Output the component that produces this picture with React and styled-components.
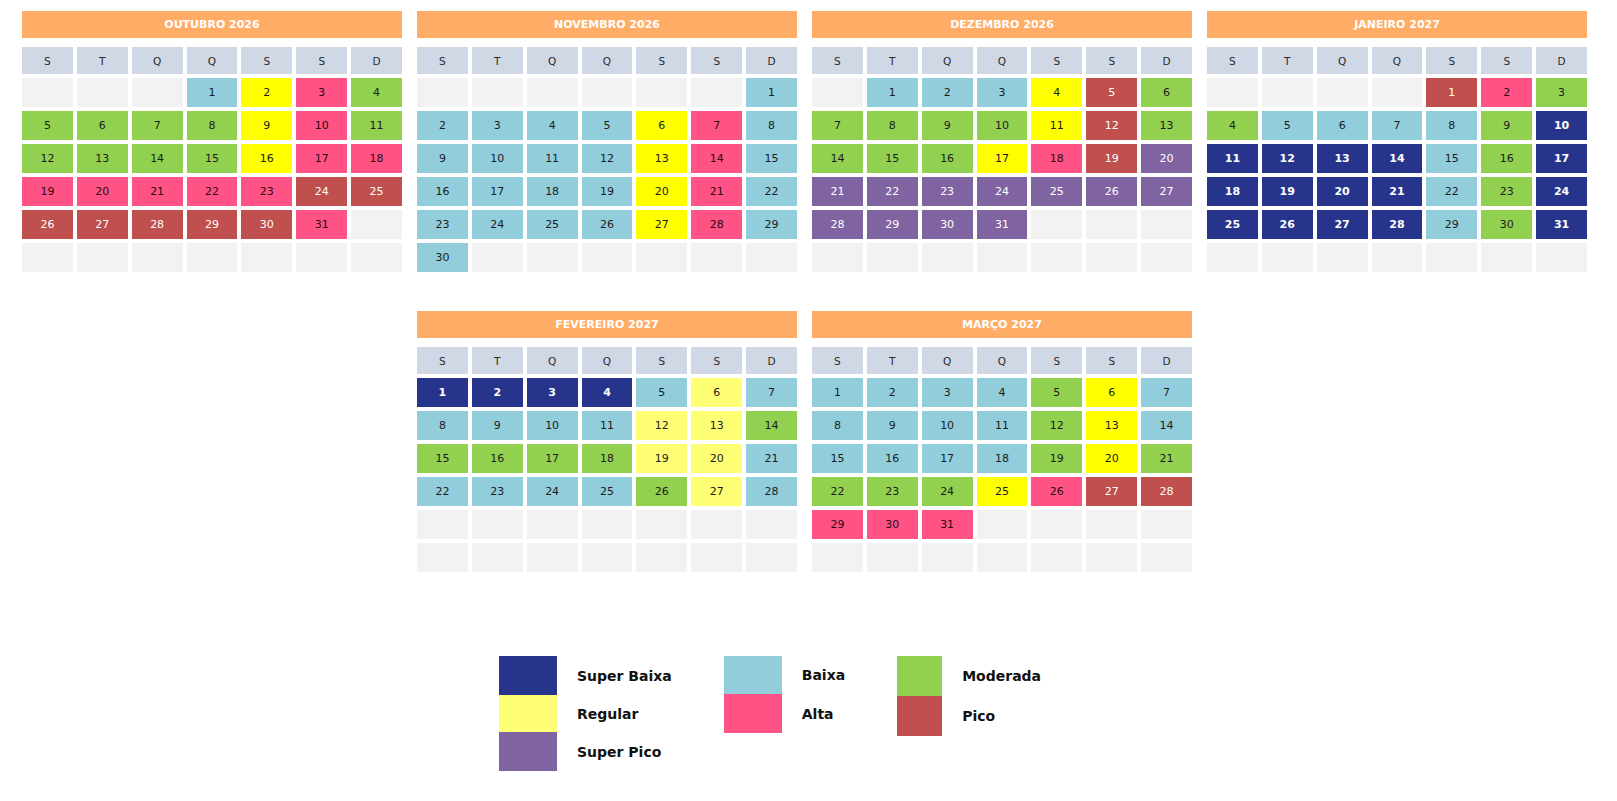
import React from 'react';
import styled, { createGlobalStyle } from 'styled-components';

// Season palette
const tones = {
   N: { bg: '#27348b', fg: '#ffffff', weight: 'bold' },
   B: { bg: '#92cddc', fg: '#1c1c1c' },
   M: { bg: '#92d050', fg: '#1c1c1c' },
   Y: { bg: '#ffff00', fg: '#1c1c1c' },
   L: { bg: '#ffff75', fg: '#1c1c1c' },
   A: { bg: '#ff5385', fg: '#2a0a12' },
   P: { bg: '#c0504d', fg: '#ffffff' },
   S: { bg: '#8064a2', fg: '#ffffff' },
   E: { bg: '#f2f2f2', fg: '#1c1c1c' }
};

const weekDays = ['S', 'T', 'Q', 'Q', 'S', 'S', 'D'];

// Each month: offset of day 1 (Monday = 0) and the tone of each day
const months = [
   { name: 'OUTUBRO 2026', start: 3, days: 'BYAM' + 'MMMMYAM' + 'MMMMYAA' + 'AAAAAPP' + 'PPPPPA' },
   { name: 'NOVEMBRO 2026', start: 6, days: 'B' + 'BBBBYAB' + 'BBBBYAB' + 'BBBBYAB' + 'BBBBYAB' + 'B' },
   { name: 'DEZEMBRO 2026', start: 1, days: 'BBBYPM' + 'MMMMYPM' + 'MMMYAPS' + 'SSSSSSS' + 'SSSS' },
   { name: 'JANEIRO 2027', start: 4, days: 'PAM' + 'MBBBBMN' + 'NNNNBMN' + 'NNNNBMN' + 'NNNNBMN' },
   { name: 'FEVEREIRO 2027', start: 0, days: 'NNNNBLB' + 'BBBBLLM' + 'MMMMLLB' + 'BBBBMLB' },
   { name: 'MARÇO 2027', start: 0, days: 'BBBBMYB' + 'BBBBMYB' + 'BBBBMYM' + 'MMMYAPP' + 'AAA' }
];

const legend = [
   { swatch: 58, items: [['N', 'Super Baixa', 39], ['L', 'Regular', 37], ['S', 'Super Pico', 39]] },
   { swatch: 58, items: [['B', 'Baixa', 38], ['A', 'Alta', 39]] },
   { swatch: 45, items: [['M', 'Moderada', 40], ['P', 'Pico', 40]] }
];

const GlobalStyle = createGlobalStyle`
   html, body {
      margin    : 0;
      background: #ffffff;
   }
   body {
      font-family: "DejaVu Sans", Verdana, sans-serif;
      color      : #1c1c1c;
   }
`;

// Styled Components
const Page = styled.div`
   width     : 1617px;
   min-height: 801px;
   padding   : 11px 8px 0 0;
   box-sizing: border-box;
`;

const CalendarRow = styled.div`
   display        : flex;
   justify-content: center;
   gap            : 15px;
   margin-bottom  : 39px;
`;

const Calendar = styled.section`
   width: 380px;
`;

const MonthTitle = styled.h2`
   margin        : 0 0 9px;
   height        : 27px;
   line-height   : 27px;
   background    : #ffad66;
   color         : #ffffff;
   font-size     : 11px;
   font-weight   : bold;
   text-align    : center;
`;

const Grid = styled.div`
   display              : grid;
   grid-template-columns: repeat(7, 1fr);
   grid-template-rows   : 27px;
   grid-auto-rows       : 29px;
   gap                  : 4px;
`;

const DayHead = styled.div`
   display        : flex;
   align-items    : center;
   justify-content: center;
   background     : #d0d8e6;
   color          : #2a2a2a;
   font-size      : 10.5px;
`;

const DayCell = styled.div`
   display        : flex;
   align-items    : center;
   justify-content: center;
   background     : ${p => tones[p.$tone].bg};
   color          : ${p => tones[p.$tone].fg};
   font-weight    : ${p => tones[p.$tone].weight || 'normal'};
   font-size      : 11px;
`;

const Legend = styled.div`
   display     : flex;
   align-items : flex-start;
   gap         : 52px;
   margin-top  : 84px;
   padding-left: 499px;
`;

const LegendColumn = styled.div`
   display       : flex;
   flex-direction: column;
`;

const LegendItem = styled.div`
   display    : flex;
   align-items: center;
   gap        : 20px;
`;

const Swatch = styled.span`
   flex      : none;
   width     : ${p => p.$w}px;
   height    : ${p => p.$h}px;
   background: ${p => tones[p.$tone].bg};
`;

const LegendLabel = styled.span`
   font-size  : 14px;
   font-weight: bold;
   color      : #111111;
   white-space: nowrap;
`;

function buildCells(month) {
   const cells = [];
   for (let i = 0; i < month.start; i++) cells.push({ tone: 'E', label: '' });
   month.days.split('').forEach((tone, i) => cells.push({ tone, label: i + 1 }));
   while (cells.length < 42) cells.push({ tone: 'E', label: '' });
   return cells;
}

const MonthCalendar = ({ month }) => (
   <Calendar>
      <MonthTitle>{month.name}</MonthTitle>
      <Grid>
         {weekDays.map((d, i) => <DayHead key={'h' + i}>{d}</DayHead>)}
         {buildCells(month).map((c, i) => (
            <DayCell key={i} $tone={c.tone}>{c.label}</DayCell>
         ))}
      </Grid>
   </Calendar>
);

export default function App() {
   return (
      <Page>
         <GlobalStyle />
         <CalendarRow>
            {months.slice(0, 4).map(m => <MonthCalendar key={m.name} month={m} />)}
         </CalendarRow>
         <CalendarRow>
            {months.slice(4).map(m => <MonthCalendar key={m.name} month={m} />)}
         </CalendarRow>

         <Legend>
            {legend.map((col, ci) => (
               <LegendColumn key={ci}>
                  {col.items.map(([tone, label, h]) => (
                     <LegendItem key={label}>
                        <Swatch $tone={tone} $w={col.swatch} $h={h} />
                        <LegendLabel>{label}</LegendLabel>
                     </LegendItem>
                  ))}
               </LegendColumn>
            ))}
         </Legend>
      </Page>
   );
}
